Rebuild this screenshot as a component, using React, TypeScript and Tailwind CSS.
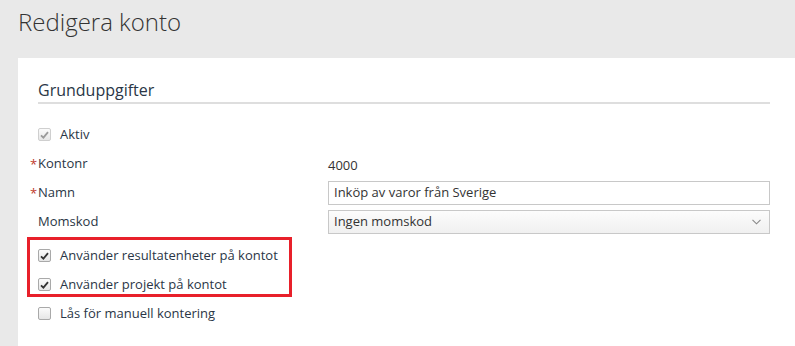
import React from "react";

const Check = ({ checked, disabled }: { checked?: boolean; disabled?: boolean }) => (
  <span
    className={`flex h-[13px] w-[13px] shrink-0 items-center justify-center rounded-[2px] border bg-gradient-to-b from-[#fbfbfb] to-[#e6e6e6] ${
      disabled ? "border-[#cfcfcf]" : "border-[#a9a9a9]"
    }`}
  >
    {checked && (
      <svg width="9" height="8" viewBox="0 0 9 8">
        <path
          d="M1 4.3 L3.4 6.6 L8 1.2"
          fill="none"
          stroke={disabled ? "#9a9a9a" : "#333"}
          strokeWidth="1.8"
        />
      </svg>
    )}
  </span>
);

const CheckRow = ({ label, checked, disabled }: { label: string; checked?: boolean; disabled?: boolean }) => (
  <div className="flex h-[29px] items-center gap-[9px]">
    <Check checked={checked} disabled={disabled} />
    <span className="text-[13px] text-[#2a3646]">{label}</span>
  </div>
);

const FieldRow = ({ label, required, children }: { label: string; required?: boolean; children: React.ReactNode }) => (
  <div className="flex h-[29px] items-center">
    <div className="relative w-[290px] text-[13px] text-[#2a3646]">
      {required && <span className="absolute -left-[8px] top-[1px] text-[#c0392b]">*</span>}
      {label}
    </div>
    <div className="flex-1">{children}</div>
  </div>
);

export default function App() {
  return (
    <div
      className="flex h-[346px] w-full flex-col overflow-hidden bg-[#e9e9e9]"
      style={{ fontFamily: '"Open Sans", sans-serif' }}
    >
      <h1 className="h-[58px] pl-[18px] pt-[2px] text-[24px] font-light leading-[40px] text-[#333]">
        Redigera konto
      </h1>
      <div className="relative ml-[18px] flex-1 bg-white pl-[20px] pr-[25px] pt-[21px]">
        <h2 className="border-b-2 border-[#dedede] pb-[1px] text-[16px] leading-[22px] text-[#2a3646]">
          Grunduppgifter
        </h2>
        <div className="mt-[16px]">
          <CheckRow label="Aktiv" checked disabled />
          <FieldRow label="Kontonr" required>
            <span className="text-[13px] text-[#333]">4000</span>
          </FieldRow>
          <FieldRow label="Namn" required>
            <div className="flex h-[24px] items-center border border-[#c8c8c8] px-[5px] text-[13px] text-[#333]">
              Inköp av varor från Sverige
            </div>
          </FieldRow>
          <FieldRow label="Momskod">
            <div className="flex h-[24px] items-center justify-between border border-[#c8c8c8] bg-gradient-to-b from-[#fcfcfc] to-[#f0f0f0] pl-[5px] pr-[8px] text-[13px] text-[#333]">
              <span>Ingen momskod</span>
              <svg width="9" height="6" viewBox="0 0 9 6">
                <path d="M0.5 0.8 L4.5 4.8 L8.5 0.8" fill="none" stroke="#888" strokeWidth="1.1" />
              </svg>
            </div>
          </FieldRow>
          <div className="mt-[5px]">
            <CheckRow label="Använder resultatenheter på kontot" checked />
            <CheckRow label="Använder projekt på kontot" checked />
            <CheckRow label="Lås för manuell kontering" />
          </div>
        </div>
        <div className="absolute left-[9px] top-[179px] h-[60px] w-[265px] border-[3px] border-[#e8202a]" />
      </div>
    </div>
  );
}
